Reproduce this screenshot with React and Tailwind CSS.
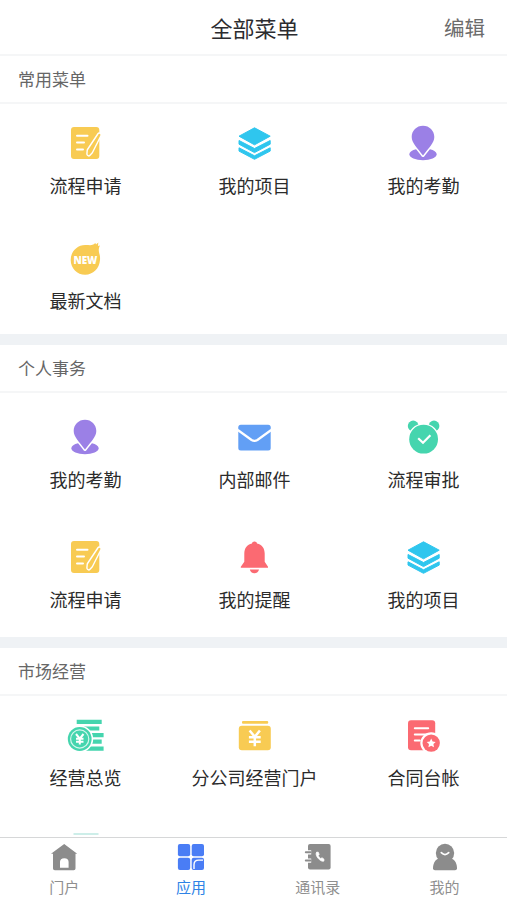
import React from 'react';

const Glyph = ({ children }) => (
  <svg className="block h-[40px] w-[41px] overflow-visible" viewBox="0 0 41 40" fill="none">{children}</svg>
);

const YELLOW = '#f8cb53';
const GREEN = '#45d5ae';
const RED = '#fb6a72';
const PURPLE = '#9b80e6';
const CYAN = '#2fc6ee';

const FormIcon = () => (
  <Glyph>
    <rect x="7" y="4" width="28.3" height="32" rx="3" fill={YELLOW} />
    <path d="M13 12.800h10.500M13 19.600h7M13 26.600h6" stroke="#fff" strokeWidth="2" strokeLinecap="round" />
    <path d="M35.300 12 27 28.500l-2.300 2.500.3-3.500z" stroke="#fff" strokeWidth="5" strokeLinecap="round" strokeLinejoin="round" />
    <path d="M35.300 12 27 28.500l-2.300 2.500.3-3.500z" fill={YELLOW} stroke={YELLOW} strokeWidth="2.200" strokeLinecap="round" strokeLinejoin="round" />
  </Glyph>
);

const LayersIcon = () => (
  <Glyph>
    <g fill={CYAN} stroke={CYAN} strokeWidth="1" strokeLinejoin="round">
      <path d="M21.500 4.800 37.200 13.200 21.500 21.800 6 13.200z" />
      <path d="M6 17.500 21.500 25.500 37.200 17.500v3.700L21.500 29.600 6 21.200z" />
      <path d="M6 24.800 21.500 32.800 37.200 24.800v3.300L21.500 36.300 6 28.100z" />
    </g>
  </Glyph>
);

const PinIcon = () => (
  <Glyph>
    <ellipse cx="21" cy="31.300" rx="13.600" ry="6" fill={PURPLE} />
    <path d="M21 2.700c6.400 0 11.300 4.900 11.300 11.200 0 6-5.300 10.400-11.300 18.600C15 24.300 9.700 19.900 9.700 13.900 9.700 7.600 14.600 2.700 21 2.700z" fill={PURPLE} stroke="#fff" strokeWidth="3" strokeLinejoin="round" paintOrder="stroke" />
  </Glyph>
);

const NewIcon = () => (
  <Glyph>
    <path d="M21.200 7c3.400-.1 5.700.7 8-.5 1.200-.5 1.500-1.600 2.400-1.200l.4 1.100 2.300-2-.3 3.500 1.900-.4c-1.300 2.500-1.500 4.500-.6 8 .7 2.200.9 4 .7 6.500C35.400 30.500 29.100 36.700 21.200 36.700 13.100 36.700 6.700 30.100 6.700 21.900 6.700 13.600 13.100 7.100 21.200 7z" fill={YELLOW} />
    <text x="21.400" y="26.200" fill="#fff" fontSize="11" fontWeight="800" textAnchor="middle" textLength="24" lengthAdjust="spacingAndGlyphs" fontFamily="'Open Sans', 'Noto Sans', sans-serif">NEW</text>
  </Glyph>
);

const MailIcon = () => (
  <Glyph>
    <rect x="5.300" y="7.800" width="32.400" height="25.600" rx="2.500" fill="#629ff5" />
    <path d="M4.800 13 18.600 23q2.900 1.900 5.800 0L38.200 13" stroke="#fff" strokeWidth="2.200" />
  </Glyph>
);

const AlarmIcon = () => (
  <Glyph>
    <circle cx="11.200" cy="9" r="5.400" fill={GREEN} />
    <circle cx="32" cy="9" r="5.400" fill={GREEN} />
    <circle cx="21.600" cy="22.200" r="14.400" fill={GREEN} stroke="#fff" strokeWidth="2.600" paintOrder="stroke" />
    <path d="m16.200 21.200 4.800 4.600 7.400-7.600" stroke="#fff" strokeWidth="2.200" />
  </Glyph>
);

const BellIcon = () => (
  <Glyph>
    <path d="M19 6.400C19 3.700 24 3.700 24 6.400c5 1 7.700 4.900 7.700 10v8.300l3.300 5.100v.9H7.800v-.9l3.500-5.100v-8.300c0-5.100 2.700-9 7.700-10z" fill={RED} />
    <path d="M16.800 32.600h9.200c-.5 2.300-2.200 3.700-4.600 3.700s-4.100-1.400-4.600-3.700z" fill={RED} />
  </Glyph>
);

const CoinsIcon = () => (
  <Glyph>
    <path d="M12.700 4.700h25v4.200h-25zM20 11.400h15.300v4.200H20zM22 18.100h17.600v4.200H22zM22 24.600h15.700v4.200H22zM22 31.400h17.600v4.300H22z" fill={GREEN} />
    <circle cx="15.700" cy="24" r="11.900" fill={GREEN} stroke="#fff" strokeWidth="3.200" paintOrder="stroke" />
    <circle cx="15.700" cy="24" r="9.100" stroke="#d5f7ed" strokeWidth="1.200" />
    <path d="m12 19 3.800 4.600 3.700-4.600M12 23.800h7.500M12 26.800h7.500M15.800 23.500v6" stroke="#fff" strokeWidth="2" />
  </Glyph>
);

const WalletIcon = () => (
  <Glyph>
    <rect x="9" y="6" width="26.200" height="2.800" rx="1" fill={YELLOW} />
    <rect x="5.800" y="10.700" width="32" height="24.500" rx="3" fill={YELLOW} />
    <path d="m16.600 15.500 5.200 6.300 5.100-6.300M15.900 22.200h11.800M15.900 26.700h11.800M21.800 21.500v9.700" stroke="#fff" strokeWidth="2.500" />
  </Glyph>
);

const ContractIcon = () => (
  <Glyph>
    <rect x="6" y="5.300" width="27.200" height="30" rx="3" fill={RED} />
    <path d="M12.800 13.300h13.400M12.800 19.500h13.400M12.800 25.500h5" stroke="#fff" strokeWidth="2" strokeLinecap="round" />
    <circle cx="29.200" cy="28.100" r="8.700" fill={RED} stroke="#fff" strokeWidth="4.400" paintOrder="stroke" />
    <path d="m29.200 23.600 1.400 2.900 3.100.4-2.300 2.200.6 3.100-2.800-1.500-2.800 1.500.6-3.100-2.300-2.200 3.100-.4z" fill="#fff" />
  </Glyph>
);

const StackIcon = () => (
  <Glyph>
    <rect x="9.500" y="4" width="25" height="2" fill="#cdeee9" />
  </Glyph>
);

const TabGlyph = ({ children }) => (
  <svg className="block size-[30px]" viewBox="0 0 30 30" fill="none">{children}</svg>
);

const HomeTab = () => (
  <TabGlyph>
    <path fillRule="evenodd" d="M16.200 2 29.200 11.700H27.500V26.500q0 1.800-1.800 1.800H6.800Q5 28.300 5 26.500V11.700H3zM12 25.800h8.600V20q0-3.800-4.300-3.800T12 20z" fill="#8c8c8c" />
  </TabGlyph>
);

const AppsTab = () => (
  <TabGlyph>
    <g fill="#4a7df5">
      <rect x="2.900" y="2" width="12.300" height="12.300" rx="2" />
      <rect x="16.700" y="2" width="12.300" height="12.300" rx="2" />
      <rect x="2.900" y="15.700" width="12.300" height="12.300" rx="2" />
      <rect x="16.700" y="15.700" width="12.300" height="12.300" rx="2" />
    </g>
    <path d="M19 27v-4.200q0-4.700 4.700-4.700h4.300" stroke="#fff" strokeWidth="1.400" />
  </TabGlyph>
);

const BookTab = () => (
  <TabGlyph>
    <rect x="6" y="2" width="22.600" height="25.400" rx="2" fill="#8c8c8c" />
    <path d="M5.500 8.200h3.700v4.300H5.500zM5.500 16.500h3.700v4.300H5.500z" fill="#fff" />
    <path d="M3.800 10.300h4.700M3.800 18.600h4.700" stroke="#8c8c8c" strokeWidth="2" strokeLinecap="round" />
    <path d="M14.700 10.100c-1.100 1.200-.7 3.700 1.200 6 2 2.500 4.400 3.700 6 3l.1-1.900-2-1.500-1.200.9c-1.200-.6-2.100-1.700-2.500-3l.9-1.200-.9-2.200z" fill="#fff" stroke="#fff" strokeWidth=".7" strokeLinejoin="round" />
  </TabGlyph>
);

const PersonTab = () => (
  <TabGlyph>
    <circle cx="16" cy="11" r="9.200" fill="#8c8c8c" />
    <path d="M9.400 16.500h13.200c3.500 1.600 5.400 5.300 5.400 9.800q0 2-2 2H6q-2 0-2-2c0-4.500 1.900-8.200 5.400-9.800z" fill="#8c8c8c" />
    <path d="M12.300 10.700q3.700 3.800 7.400 0" stroke="#fff" strokeWidth="1.700" strokeLinecap="round" />
  </TabGlyph>
);

const sections = [
  {
    title: '常用菜单',
    gridClass: 'h-[230px] pt-[19px] auto-rows-[115px]',
    items: [
      ['流程申请', FormIcon],
      ['我的项目', LayersIcon],
      ['我的考勤', PinIcon],
      ['最新文档', NewIcon],
    ],
  },
  {
    title: '个人事务',
    gridClass: 'h-[244px] pt-[24px] auto-rows-[120px]',
    items: [
      ['我的考勤', PinIcon],
      ['内部邮件', MailIcon],
      ['流程审批', AlarmIcon],
      ['流程申请', FormIcon],
      ['我的提醒', BellIcon],
      ['我的项目', LayersIcon],
    ],
  },
  {
    title: '市场经营',
    gridClass: 'pt-[19px] auto-rows-[114px]',
    items: [
      ['经营总览', CoinsIcon],
      ['分公司经营门户', WalletIcon],
      ['合同台帐', ContractIcon],
      ['', StackIcon],
    ],
  },
];

const tabs = [
  ['门户', HomeTab],
  ['应用', AppsTab, true],
  ['通讯录', BookTab],
  ['我的', PersonTab],
];

function Section({ title, gridClass, items }) {
  return (
    <section className="shrink-0 bg-white">
      <h2 className="flex h-[48px] items-center border-b-2 border-[#f5f6f7] pl-[18px] text-[17px] text-[#666]">
        {title}
      </h2>
      <div className={`grid grid-cols-3 ${gridClass}`}>
        {items.map(([label, Icon], i) => (
          <div key={i} className="flex flex-col items-center gap-2">
            <Icon />
            <span className="h-7 whitespace-nowrap pl-[2px] text-[18px] leading-7 text-[#2b2b2b]">{label}</span>
          </div>
        ))}
      </div>
    </section>
  );
}

export default function App() {
  return (
    <div className="flex h-[900px] w-[507px] flex-col overflow-hidden bg-white font-['Noto_Sans_CJK_SC',sans-serif]">
      <header className="grid h-[56px] shrink-0 grid-cols-3 items-center border-b-2 border-[#f5f6f7]">
        <h1 className="col-start-2 pl-[2px] text-center text-[22px] leading-8 text-[#2c2c30]">全部菜单</h1>
        <span className="pr-[22px] text-right text-[20.5px] leading-8 text-[#6b6b6b]">编辑</span>
      </header>
      <main className="flex min-h-0 flex-1 flex-col gap-[11px] overflow-hidden bg-[#eff2f5]">
        {sections.map((s) => (
          <Section key={s.title} {...s} />
        ))}
      </main>
      <nav className="grid h-[63px] shrink-0 grid-cols-4 border-t border-[#d6d7d8] bg-white pt-1">
        {tabs.map(([label, Icon, active]) => (
          <div key={label} className="flex flex-col items-center gap-[5px]">
            <Icon />
            <span className={`pl-[2px] text-[15px] leading-5 ${active ? 'text-[#2e83e6]' : 'text-[#8f8f8f]'}`}>{label}</span>
          </div>
        ))}
      </nav>
    </div>
  );
}
